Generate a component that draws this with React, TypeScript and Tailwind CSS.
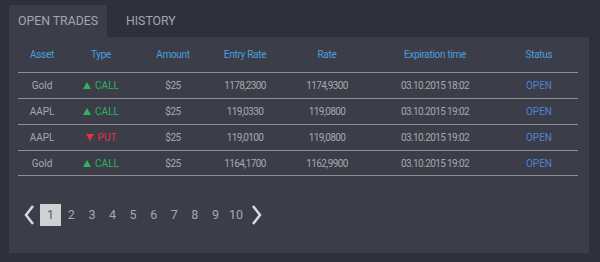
import React from "react";

const rows = [
  { asset: "Gold", type: "CALL", amount: "$25", entry: "1178,2300", rate: "1174,9300", exp: "03.10.2015 18:02" },
  { asset: "AAPL", type: "CALL", amount: "$25", entry: "119,0330", rate: "119,0800", exp: "03.10.2015 19:02" },
  { asset: "AAPL", type: "PUT", amount: "$25", entry: "119,0100", rate: "119,0800", exp: "03.10.2015 19:02" },
  { asset: "Gold", type: "CALL", amount: "$25", entry: "1164,1700", rate: "1162,9900", exp: "03.10.2015 19:02" },
];

const cols = "grid grid-cols-[48px_70px_74px_70px_94px_122px_82px] items-center";

function Up() {
  return (
    <svg width="8" height="7" viewBox="0 0 8 7" className="mr-[4px]">
      <polygon points="4,0 8,7 0,7" fill="#2fb35c" />
    </svg>
  );
}
function Down() {
  return (
    <svg width="8" height="7" viewBox="0 0 8 7" className="mr-[4px]">
      <polygon points="0,0 8,0 4,7" fill="#e8303a" />
    </svg>
  );
}

export default function App() {
  return (
    <div
      className="w-[600px] h-[262px] bg-[#2e313b] pt-[5px] pl-[9px]"
      style={{ fontFamily: "Roboto, 'Open Sans', sans-serif" }}
    >
      <div className="w-[580px]">
        <div className="flex h-[32px] items-center">
          <div className="h-full w-[98px] bg-[#3b3e48] flex items-center justify-center text-[12.3px] text-[#a4a6ac]">
            OPEN TRADES
          </div>
          <div className="h-full pl-[19px] flex items-center text-[12.3px] text-[#a4a6ac]">
            HISTORY
          </div>
        </div>
        <div className="bg-[#3b3e48] h-[216px] pl-[9px]">
          <div className="w-[560px]">
            <div className={`${cols} h-[35px] text-[10px] tracking-[-0.3px] text-[#4b9fdf]`}>
              <div className="text-center">Asset</div>
              <div className="text-center">Type</div>
              <div className="text-center">Amount</div>
              <div className="text-center">Entry Rate</div>
              <div className="text-center">Rate</div>
              <div className="text-center">Expiration time</div>
              <div className="text-center pl-[4px]">Status</div>
            </div>
            {rows.map((r, i) => (
              <div
                key={i}
                className={`${cols} h-[26px] border-t border-[#8c8e94] text-[10px] text-[#a7a8ad] ${i === rows.length - 1 ? "border-b" : ""}`}
              >
                <div className="text-center">{r.asset}</div>
                <div className={`flex items-center justify-center ${r.type === "CALL" ? "text-[#2fb35c]" : "text-[#e8303a]"}`}>
                  {r.type === "CALL" ? <Up /> : <Down />}
                  {r.type}
                </div>
                <div className="text-center tracking-[-0.5px]">{r.amount}</div>
                <div className="text-center tracking-[-0.6px]">{r.entry}</div>
                <div className="text-center tracking-[-0.6px]">{r.rate}</div>
                <div className="text-center tracking-[-0.6px]">{r.exp}</div>
                <div className="text-center pl-[4px] text-[#4d82d2]">OPEN</div>
              </div>
            ))}
            <div className="flex items-center mt-[28px] h-[22px]">
              <svg width="12" height="22" viewBox="0 0 12 22" className="ml-[6px] mr-[4px]">
                <polyline points="9,2 2,11 9,20" fill="none" stroke="#d8d9dc" strokeWidth="2.5" />
              </svg>
              {[1, 2, 3, 4, 5, 6, 7, 8, 9, 10].map((n) => (
                <div
                  key={n}
                  className={`h-[22px] w-[20.6px] flex items-center justify-center text-[12.5px] ${n === 1 ? "bg-[#cfd0d2] text-[#5a5c62] w-[21px]" : "text-[#a7a8ad]"}`}
                >
                  {n}
                </div>
              ))}
              <svg width="12" height="22" viewBox="0 0 12 22" className="ml-[4px]">
                <polyline points="3,2 10,11 3,20" fill="none" stroke="#d8d9dc" strokeWidth="2.5" />
              </svg>
            </div>
          </div>
        </div>
      </div>
    </div>
  );
}
